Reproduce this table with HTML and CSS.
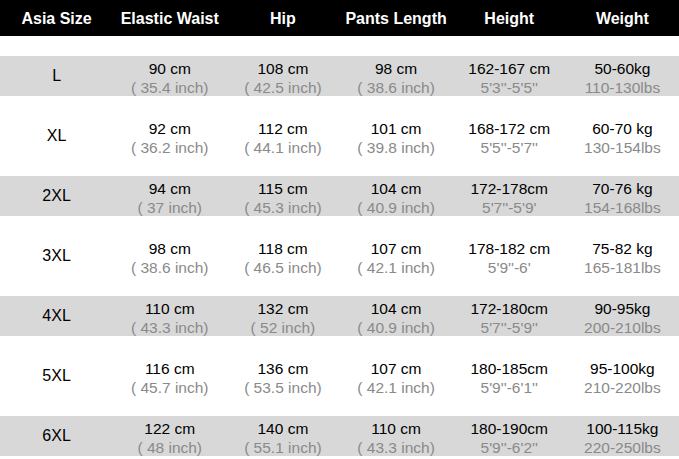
FILE: index.html
```html
<!DOCTYPE html>
<html>
<head>
<meta charset="utf-8">
<link rel="stylesheet" href="styles.css">
</head>
<body>
<div class="chart">
  <div class="row head">
    <div class="cell">Asia Size</div>
    <div class="cell">Elastic Waist</div>
    <div class="cell">Hip</div>
    <div class="cell">Pants Length</div>
    <div class="cell">Height</div>
    <div class="cell">Weight</div>
  </div>
  <div class="spacer"></div>
  <div class="row gray">
    <div class="cell size">L</div>
    <div class="cell val"><span class="main">90 cm</span><span class="sub">( 35.4 inch)</span></div>
    <div class="cell val"><span class="main">108 cm</span><span class="sub">( 42.5 inch)</span></div>
    <div class="cell val"><span class="main">98 cm</span><span class="sub">( 38.6 inch)</span></div>
    <div class="cell val"><span class="main">162-167 cm</span><span class="sub">5'3''-5'5''</span></div>
    <div class="cell val"><span class="main">50-60kg</span><span class="sub">110-130lbs</span></div>
  </div>
  <div class="row white">
    <div class="cell size">XL</div>
    <div class="cell val"><span class="main">92 cm</span><span class="sub">( 36.2 inch)</span></div>
    <div class="cell val"><span class="main">112 cm</span><span class="sub">( 44.1 inch)</span></div>
    <div class="cell val"><span class="main">101 cm</span><span class="sub">( 39.8 inch)</span></div>
    <div class="cell val"><span class="main">168-172 cm</span><span class="sub">5'5''-5'7''</span></div>
    <div class="cell val"><span class="main">60-70 kg</span><span class="sub">130-154lbs</span></div>
  </div>
  <div class="row gray">
    <div class="cell size">2XL</div>
    <div class="cell val"><span class="main">94 cm</span><span class="sub">( 37 inch)</span></div>
    <div class="cell val"><span class="main">115 cm</span><span class="sub">( 45.3 inch)</span></div>
    <div class="cell val"><span class="main">104 cm</span><span class="sub">( 40.9 inch)</span></div>
    <div class="cell val"><span class="main">172-178cm</span><span class="sub">5'7''-5'9'</span></div>
    <div class="cell val"><span class="main">70-76 kg</span><span class="sub">154-168lbs</span></div>
  </div>
  <div class="row white">
    <div class="cell size">3XL</div>
    <div class="cell val"><span class="main">98 cm</span><span class="sub">( 38.6 inch)</span></div>
    <div class="cell val"><span class="main">118 cm</span><span class="sub">( 46.5 inch)</span></div>
    <div class="cell val"><span class="main">107 cm</span><span class="sub">( 42.1 inch)</span></div>
    <div class="cell val"><span class="main">178-182 cm</span><span class="sub">5'9''-6'</span></div>
    <div class="cell val"><span class="main">75-82 kg</span><span class="sub">165-181lbs</span></div>
  </div>
  <div class="row gray">
    <div class="cell size">4XL</div>
    <div class="cell val"><span class="main">110 cm</span><span class="sub">( 43.3 inch)</span></div>
    <div class="cell val"><span class="main">132 cm</span><span class="sub">( 52 inch)</span></div>
    <div class="cell val"><span class="main">104 cm</span><span class="sub">( 40.9 inch)</span></div>
    <div class="cell val"><span class="main">172-180cm</span><span class="sub">5'7''-5'9''</span></div>
    <div class="cell val"><span class="main">90-95kg</span><span class="sub">200-210lbs</span></div>
  </div>
  <div class="row white">
    <div class="cell size">5XL</div>
    <div class="cell val"><span class="main">116 cm</span><span class="sub">( 45.7 inch)</span></div>
    <div class="cell val"><span class="main">136 cm</span><span class="sub">( 53.5 inch)</span></div>
    <div class="cell val"><span class="main">107 cm</span><span class="sub">( 42.1 inch)</span></div>
    <div class="cell val"><span class="main">180-185cm</span><span class="sub">5'9''-6'1''</span></div>
    <div class="cell val"><span class="main">95-100kg</span><span class="sub">210-220lbs</span></div>
  </div>
  <div class="row gray">
    <div class="cell size">6XL</div>
    <div class="cell val"><span class="main">122 cm</span><span class="sub">( 48 inch)</span></div>
    <div class="cell val"><span class="main">140 cm</span><span class="sub">( 55.1 inch)</span></div>
    <div class="cell val"><span class="main">110 cm</span><span class="sub">( 43.3 inch)</span></div>
    <div class="cell val"><span class="main">180-190cm</span><span class="sub">5'9''-6'2''</span></div>
    <div class="cell val"><span class="main">100-115kg</span><span class="sub">220-250lbs</span></div>
  </div>
</div>
</body>
</html>
```
FILE: styles.css
```css
html, body {
  margin: 0;
  padding: 0;
  background: #ffffff;
}
.chart {
  width: 679px;
  font-family: "Liberation Sans", Arial, sans-serif;
  color: #000;
}
.row {
  display: grid;
  grid-template-columns: repeat(6, 1fr);
}
.cell {
  display: flex;
  flex-direction: column;
  align-items: center;
  justify-content: center;
  text-align: center;
  white-space: nowrap;
  min-height: 0;
}
.val {
  padding-top: 4px;
}
.head {
  background: #000;
  color: #fff;
  height: 36px;
  font-weight: bold;
  font-size: 16px;
}
.head .cell {
  padding-top: 1px;
}
.spacer {
  height: 20px;
}
.gray {
  background: #d8d8d8;
  height: 40px;
}
.white {
  height: 80px;
}
.size {
  font-size: 16px;
  line-height: 20px;
}
.main {
  font-size: 15.5px;
  line-height: 19.5px;
}
.sub {
  font-size: 15.5px;
  line-height: 19.5px;
  color: #8a8a8a;
}
```
